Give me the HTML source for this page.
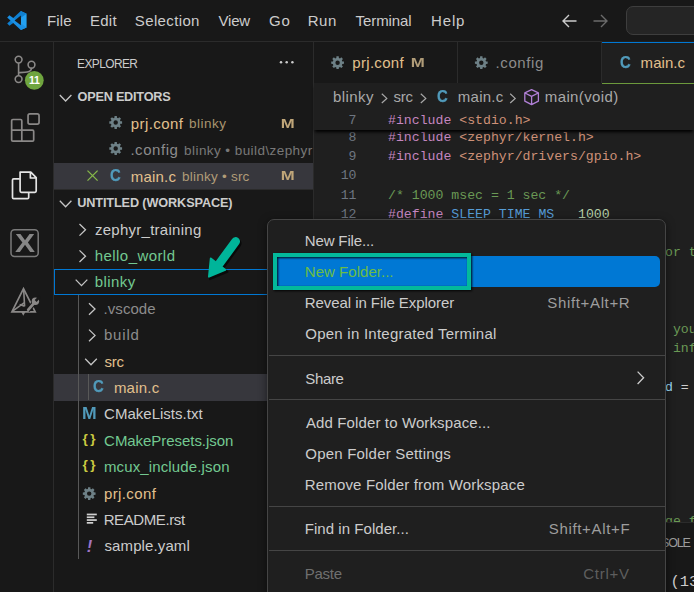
<!DOCTYPE html>
<html lang="en">
<head>
<meta charset="utf-8">
<title>main.c - Untitled (Workspace) - Visual Studio Code</title>
<style>
html,body{margin:0;padding:0;background:#181818;}
body{width:694px;height:592px;overflow:hidden;}
#app{position:relative;width:694px;height:592px;overflow:hidden;background:#181818;font-family:'Liberation Sans',sans-serif;}
.b{position:absolute;}
.t{position:absolute;white-space:pre;line-height:20px;height:20px;}
.ln{position:absolute;left:388px;height:19.2px;line-height:19.2px;white-space:pre;font-family:'Liberation Mono',monospace;font-size:13.2px;color:#cccccc;}
.no{position:absolute;left:316px;width:40.5px;text-align:right;height:19.2px;line-height:19.2px;font-family:'Liberation Mono',monospace;font-size:13.2px;color:#6e7681;}
.k{color:#c586c0}.s{color:#ce9178}.c{color:#6a9955}.m{color:#569cd6}.n{color:#b5cea8}.v{color:#9cdcfe}.f{color:#dcdcaa}.ty{color:#4ec9b0}
svg{position:absolute;overflow:visible;}
</style>
</head>
<body>
<div id="app">
<!-- title bar -->
<div class="b" style="left:0;top:0;width:694px;height:41px;background:#181818;border-bottom:1px solid #2b2b2b;"></div>
<!-- command center -->
<div class="b" style="left:626px;top:6px;width:90px;height:27px;background:#252525;border:1px solid #3e3e3e;border-radius:7px;"></div>
<!-- activity bar -->
<div class="b" style="left:0;top:42px;width:53px;height:550px;background:#181818;border-right:1px solid #2b2b2b;"></div>
<!-- sidebar -->
<div class="b" style="left:54px;top:42px;width:259px;height:550px;background:#181818;border-right:1px solid #2b2b2b;"></div>
<!-- open editors selected row -->
<div class="b" style="left:54px;top:163px;width:259px;height:26.4px;background:#37373d;"></div>
<!-- section divider -->
<div class="b" style="left:54px;top:189.4px;width:259px;height:1px;background:#2b2b2b;"></div>
<!-- tree selected row main.c -->
<div class="b" style="left:54px;top:374.2px;width:259px;height:26.4px;background:#37373d;"></div>
<!-- blinky focused outline -->
<div class="b" style="left:54px;top:269px;width:258px;height:24px;border:1px solid #0078d4;box-sizing:content-box;"></div>
<!-- indent guides -->
<div class="b" style="left:78px;top:295px;width:1px;height:264px;background:#585858;"></div>
<div class="b" style="left:88px;top:374px;width:1px;height:26.4px;background:#585858;"></div>
<!-- editor -->
<div class="b" style="left:314px;top:42px;width:380px;height:550px;background:#1f1f1f;"></div>
<!-- tab bar -->
<div class="b" style="left:314px;top:42px;width:380px;height:41px;background:#181818;border-bottom:1px solid #2b2b2b;"></div>
<div class="b" style="left:457px;top:42px;width:1px;height:41px;background:#2b2b2b;"></div>
<div class="b" style="left:601px;top:42px;width:1px;height:41px;background:#2b2b2b;"></div>
<div class="b" style="left:602px;top:41px;width:92px;height:43px;background:#1f1f1f;"></div>
<div class="b" style="left:602px;top:41.6px;width:92px;height:1.3px;background:#0078d4;"></div>
<!-- code -->
<div class="no" style="top:128.0px">8</div><div class="ln" style="top:128.0px"><span class="k">#include</span> <span class="s">&lt;zephyr/kernel.h&gt;</span></div>
<div class="no" style="top:147.2px">9</div><div class="ln" style="top:147.2px"><span class="k">#include</span> <span class="s">&lt;zephyr/drivers/gpio.h&gt;</span></div>
<div class="no" style="top:166.4px">10</div>
<div class="no" style="top:185.6px">11</div><div class="ln c" style="top:185.6px">/* 1000 msec = 1 sec */</div>
<div class="no" style="top:204.8px">12</div><div class="ln" style="top:204.8px"><span class="k">#define</span> <span class="m">SLEEP_TIME_MS</span>   <span class="n">1000</span></div>
<div class="no" style="top:224.0px">13</div>
<div class="no" style="top:243.2px">14</div><div class="ln c" style="top:243.2px">/* The devicetree node identifier for the "led0" alias. */</div>
<div class="no" style="top:262.4px">15</div><div class="ln" style="top:262.4px"><span class="k">#define</span> <span class="m">LED0_NODE</span> <span class="m">DT_ALIAS</span>(led0)</div>
<div class="no" style="top:281.6px">16</div>
<div class="no" style="top:300.8px">17</div><div class="ln c" style="top:300.8px">/*</div>
<div class="no" style="top:320.0px">18</div><div class="ln c" style="top:320.0px"> * A build error on this line means your board is unsupported.</div>
<div class="no" style="top:339.2px">19</div><div class="ln c" style="top:339.2px"> * See the sample documentation for information on how to fix this.</div>
<div class="no" style="top:358.4px">20</div><div class="ln c" style="top:358.4px"> */</div>
<div class="no" style="top:377.6px">21</div><div class="ln" style="top:377.6px"><span class="m">static</span> <span class="m">const</span> <span class="m">struct</span> <span class="ty">gpio_dt_spec</span> <span class="v">led</span> = <span class="m">GPIO_DT_SPEC_GET</span>(<span class="m">LED0_NODE</span>, gpios);</div>
<div class="no" style="top:396.8px">22</div>
<div class="no" style="top:416.0px">23</div><div class="ln" style="top:416.0px"><span class="m">int</span> <span class="f">main</span>(<span class="m">void</span>)</div>
<div class="no" style="top:435.2px">24</div><div class="ln" style="top:435.2px">{</div>
<div class="no" style="top:454.4px">25</div><div class="ln" style="top:454.4px">    <span class="m">int</span> <span class="v">ret</span>;</div>
<div class="no" style="top:473.6px">26</div>
<div class="no" style="top:492.8px">27</div><div class="ln" style="top:492.8px">    <span class="k">if</span> (!<span class="f">gpio_is_ready_dt</span>(&amp;<span class="v">led</span>)) {</div>
<div class="no" style="top:512.0px">28</div><div class="ln c" style="top:512.0px">    /* Toggle the LED line and change from on to off every second */</div>
<!-- breadcrumbs + sticky scroll cover -->
<div class="b" style="left:314px;top:83px;width:380px;height:46.6px;background:#1f1f1f;box-shadow:0 3px 3px -1px #000;"></div>
<div class="b" style="left:602px;top:82.8px;width:92px;height:1.4px;background:#6c9a3c;"></div>
<div class="no" style="top:110.7px">7</div><div class="ln" style="top:110.7px"><span class="k">#include</span> <span class="s">&lt;stdio.h&gt;</span></div>
<!-- panel -->
<div class="b" style="left:314px;top:522px;width:380px;height:70px;background:#181818;border-top:1px solid #2b2b2b;"></div>
<div class="ln" style="left:670.5px;top:572.8px;font-size:15.4px;color:#cccccc;">(13)</div>
<!-- icons -->
<svg width="694" height="592" style="left:0;top:0" viewBox="0 0 694 592">
<!-- vscode logo -->
<g>
<path d="M20.8 10.9 L26.6 13.7 L26.6 27.4 L20.8 30 Z" fill="#23a1f2"/>
<path d="M20.8 10.9 L7.2 23.4 L9.4 25.7 L26.6 13.7 Z" fill="#0f7fd0"/>
<path d="M20.8 30 L7.2 17.5 L9.4 15.2 L26.6 27.4 Z" fill="#1a8fe3"/>
<path d="M20.9 15.6 L20.9 25.3 L14.6 20.45 Z" fill="#181818"/>
</g>
<!-- title arrows -->
<path d="M576.5 21 H563 M569 15 L563 21 L569 27" fill="none" stroke="#cccccc" stroke-width="1.4"/>
<path d="M593.5 21 H607 M601 15 L607 21 L601 27" fill="none" stroke="#6b6b6b" stroke-width="1.4"/>
<!-- activity: source control -->
<g fill="none" stroke="#8a8887" stroke-width="1.6">
<circle cx="18.6" cy="59.6" r="3.4"/><circle cx="31.5" cy="64.7" r="3.4"/><circle cx="18.6" cy="79.1" r="3.4"/>
<path d="M18.6 63 V75.7 M31.5 68.1 C31.5 72.4 27 72.4 18.8 72.6"/>
</g>
<circle cx="34.3" cy="80.3" r="9.4" fill="#6fa53f"/>
<!-- activity: extensions -->
<g fill="none" stroke="#8a8887" stroke-width="1.7">
<path d="M11.65 120.7 Q11.65 119.5 12.85 119.5 H20.6 Q21.8 119.5 21.8 120.7 V130.2 H32.5 Q33.7 130.2 33.7 131.4 V139.9 Q33.7 141.1 32.5 141.1 H12.85 Q11.65 141.1 11.65 139.9 Z M11.65 130.2 H21.8 V141.1"/>
<rect x="28.05" y="113.95" width="11" height="10.2" rx="1.8"/>
</g>
<!-- activity: explorer (active) -->
<g fill="none" stroke="#e4e4e4" stroke-width="1.7" stroke-linejoin="round">
<path d="M20.1 172.1 H30.8 L36.2 177.6 V191 Q36.2 192.3 34.9 192.3 H21.4 Q20.1 192.3 20.1 191 Z M30.4 172.3 V178 H36"/>
<path d="M19.8 178.8 H13.7 Q12.5 178.8 12.5 180 V197.5 Q12.5 198.7 13.7 198.7 H27.5 Q28.7 198.7 28.7 197.5 V192.6"/>
</g>
<!-- activity: X box -->
<rect x="11" y="229.7" width="27.2" height="26.8" rx="3.5" fill="none" stroke="#7a7a7a" stroke-width="1.5"/>
<!-- activity: triangle tool -->
<g fill="none" stroke="#8a8887" stroke-width="1.7" stroke-linejoin="miter">
<path d="M23.5 288.6 L11.9 311.8 L35.2 311.8 Z"/>
<path d="M23.7 290 L24.6 306.4 M12.6 311.2 L24.3 302.6 M24.6 306.2 L19.6 304.4" stroke-width="1.6"/>
</g>
<path d="M21.2 312 L25.4 312 L23.3 315.8 Z" fill="#8a8887"/>
<path d="M27.6 310.4 L33.6 303.6" stroke="#181818" stroke-width="5" fill="none"/>
<path d="M28.2 309.8 L34 303.2" stroke="#8a8887" stroke-width="2.8" stroke-linecap="round" fill="none"/>
<circle cx="35.4" cy="301.2" r="3.7" fill="#8a8887"/>
<path d="M35.6 301 L40 296.6" stroke="#181818" stroke-width="2.6" fill="none"/>
<!-- sidebar: more -->
<g fill="#cccccc"><circle cx="281" cy="62.3" r="1.25"/><circle cx="286.7" cy="62.3" r="1.25"/><circle cx="292.4" cy="62.3" r="1.25"/></g>
<!-- chevrons -->
<path transform="translate(65.6 98)" d="M-5.8 -3 L0 3 L5.8 -3" fill="none" stroke="#c5c5c5" stroke-width="1.3"/>
<path transform="translate(65.6 203.8)" d="M-5.8 -3 L0 3 L5.8 -3" fill="none" stroke="#c5c5c5" stroke-width="1.3"/>
<path transform="translate(82.5 229.8)" d="M-3 -5.8 L3 0 L-3 5.8" fill="none" stroke="#c5c5c5" stroke-width="1.3"/>
<path transform="translate(82.5 256.2)" d="M-3 -5.8 L3 0 L-3 5.8" fill="none" stroke="#c5c5c5" stroke-width="1.3"/>
<path transform="translate(81.5 282.6)" d="M-5.8 -3 L0 3 L5.8 -3" fill="none" stroke="#c5c5c5" stroke-width="1.3"/>
<path transform="translate(92 309)" d="M-3 -5.8 L3 0 L-3 5.8" fill="none" stroke="#c5c5c5" stroke-width="1.3"/>
<path transform="translate(92 335.4)" d="M-3 -5.8 L3 0 L-3 5.8" fill="none" stroke="#c5c5c5" stroke-width="1.3"/>
<path transform="translate(91 361.8)" d="M-5.8 -3 L0 3 L5.8 -3" fill="none" stroke="#c5c5c5" stroke-width="1.3"/>
<!-- gears -->
<path transform="translate(115.7 122.5) scale(0.94)" d="M5.02 -1.37 L6.79 -1.24 L6.79 1.24 L5.02 1.37 L4.52 2.58 L5.68 3.92 L3.92 5.68 L2.58 4.52 L1.37 5.02 L1.24 6.79 L-1.24 6.79 L-1.37 5.02 L-2.58 4.52 L-3.92 5.68 L-5.68 3.92 L-4.52 2.58 L-5.02 1.37 L-6.79 1.24 L-6.79 -1.24 L-5.02 -1.37 L-4.52 -2.58 L-5.68 -3.92 L-3.92 -5.68 L-2.58 -4.52 L-1.37 -5.02 L-1.24 -6.79 L1.24 -6.79 L1.37 -5.02 L2.58 -4.52 L3.92 -5.68 L5.68 -3.92 L4.52 -2.58Z M2.35 0 A2.35 2.35 0 1 0 -2.35 0 A2.35 2.35 0 1 0 2.35 0Z" fill-rule="evenodd" fill="#6d8086"/>
<path transform="translate(115.7 148.5) scale(0.94)" d="M5.02 -1.37 L6.79 -1.24 L6.79 1.24 L5.02 1.37 L4.52 2.58 L5.68 3.92 L3.92 5.68 L2.58 4.52 L1.37 5.02 L1.24 6.79 L-1.24 6.79 L-1.37 5.02 L-2.58 4.52 L-3.92 5.68 L-5.68 3.92 L-4.52 2.58 L-5.02 1.37 L-6.79 1.24 L-6.79 -1.24 L-5.02 -1.37 L-4.52 -2.58 L-5.68 -3.92 L-3.92 -5.68 L-2.58 -4.52 L-1.37 -5.02 L-1.24 -6.79 L1.24 -6.79 L1.37 -5.02 L2.58 -4.52 L3.92 -5.68 L5.68 -3.92 L4.52 -2.58Z M2.35 0 A2.35 2.35 0 1 0 -2.35 0 A2.35 2.35 0 1 0 2.35 0Z" fill-rule="evenodd" fill="#6d8086"/>
<path transform="translate(89.2 493.6) scale(0.94)" d="M5.02 -1.37 L6.79 -1.24 L6.79 1.24 L5.02 1.37 L4.52 2.58 L5.68 3.92 L3.92 5.68 L2.58 4.52 L1.37 5.02 L1.24 6.79 L-1.24 6.79 L-1.37 5.02 L-2.58 4.52 L-3.92 5.68 L-5.68 3.92 L-4.52 2.58 L-5.02 1.37 L-6.79 1.24 L-6.79 -1.24 L-5.02 -1.37 L-4.52 -2.58 L-5.68 -3.92 L-3.92 -5.68 L-2.58 -4.52 L-1.37 -5.02 L-1.24 -6.79 L1.24 -6.79 L1.37 -5.02 L2.58 -4.52 L3.92 -5.68 L5.68 -3.92 L4.52 -2.58Z M2.35 0 A2.35 2.35 0 1 0 -2.35 0 A2.35 2.35 0 1 0 2.35 0Z" fill-rule="evenodd" fill="#6d8086"/>
<path transform="translate(337.6 62.7) scale(0.94)" d="M5.02 -1.37 L6.79 -1.24 L6.79 1.24 L5.02 1.37 L4.52 2.58 L5.68 3.92 L3.92 5.68 L2.58 4.52 L1.37 5.02 L1.24 6.79 L-1.24 6.79 L-1.37 5.02 L-2.58 4.52 L-3.92 5.68 L-5.68 3.92 L-4.52 2.58 L-5.02 1.37 L-6.79 1.24 L-6.79 -1.24 L-5.02 -1.37 L-4.52 -2.58 L-5.68 -3.92 L-3.92 -5.68 L-2.58 -4.52 L-1.37 -5.02 L-1.24 -6.79 L1.24 -6.79 L1.37 -5.02 L2.58 -4.52 L3.92 -5.68 L5.68 -3.92 L4.52 -2.58Z M2.35 0 A2.35 2.35 0 1 0 -2.35 0 A2.35 2.35 0 1 0 2.35 0Z" fill-rule="evenodd" fill="#6d8086"/>
<path transform="translate(481.3 62.7) scale(0.94)" d="M5.02 -1.37 L6.79 -1.24 L6.79 1.24 L5.02 1.37 L4.52 2.58 L5.68 3.92 L3.92 5.68 L2.58 4.52 L1.37 5.02 L1.24 6.79 L-1.24 6.79 L-1.37 5.02 L-2.58 4.52 L-3.92 5.68 L-5.68 3.92 L-4.52 2.58 L-5.02 1.37 L-6.79 1.24 L-6.79 -1.24 L-5.02 -1.37 L-4.52 -2.58 L-5.68 -3.92 L-3.92 -5.68 L-2.58 -4.52 L-1.37 -5.02 L-1.24 -6.79 L1.24 -6.79 L1.37 -5.02 L2.58 -4.52 L3.92 -5.68 L5.68 -3.92 L4.52 -2.58Z M2.35 0 A2.35 2.35 0 1 0 -2.35 0 A2.35 2.35 0 1 0 2.35 0Z" fill-rule="evenodd" fill="#6d8086"/>
<!-- close x -->
<path d="M87.5 170.6 L97.6 180.6 M97.6 170.6 L87.5 180.6" stroke="#86b84a" stroke-width="1.3" fill="none"/>
<!-- readme lines -->
<g fill="#d0d0d0"><rect x="86.8" y="513.6" width="10" height="1.7"/><rect x="86.8" y="516.4" width="7.6" height="1.7"/><rect x="86.8" y="519.2" width="10" height="1.7"/><rect x="86.8" y="522" width="6.4" height="1.7"/></g>
<!-- breadcrumb separators -->
<g fill="none" stroke="#a9a9a9" stroke-width="1.2">
<path d="M381.8 93.8 L386.8 98.4 L381.8 103"/><path d="M420.8 93.8 L425.8 98.4 L420.8 103"/><path d="M510.2 93.8 L515.2 98.4 L510.2 103"/>
</g>
<!-- breadcrumb cube -->
<g fill="none" stroke="#b180d7" stroke-width="1.3" stroke-linejoin="round">
<path d="M531.6 89.6 L538.4 92.8 V101.2 L531.6 104.6 L524.8 101.2 V92.8 Z M525 93 L531.6 96.4 L538.2 93 M531.6 96.4 V104.4"/>
</g>
<!-- submenu arrow drawn in overlay -->
</svg>
<!-- letter icons -->
<span class="t" style="left:26.3px;top:70.3px;width:16px;text-align:center;font-size:10.5px;font-weight:bold;color:#fff;letter-spacing:-0.3px;">11</span>
<span class="t" style="left:13.6px;top:231.2px;width:22px;text-align:center;font-size:25px;line-height:24px;height:24px;font-weight:bold;color:#868686;transform:scaleX(1.2);">X</span>
<span class="t" style="left:110.0px;top:165.5px;font-size:16px;font-weight:bold;color:#519aba;-webkit-text-stroke:0.25px #519aba;transform:scaleX(0.93);transform-origin:0 50%;">C</span>
<span class="t" style="left:92.5px;top:376.5px;font-size:16px;font-weight:bold;color:#519aba;-webkit-text-stroke:0.25px #519aba;transform:scaleX(0.93);transform-origin:0 50%;">C</span>
<span class="t" style="left:619.6px;top:52.9px;font-size:16px;font-weight:bold;color:#519aba;-webkit-text-stroke:0.25px #519aba;transform:scaleX(0.93);transform-origin:0 50%;">C</span>
<span class="t" style="left:437.0px;top:86.6px;font-size:16px;font-weight:bold;color:#519aba;-webkit-text-stroke:0.25px #519aba;transform:scaleX(0.93);transform-origin:0 50%;">C</span>
<span class="t" style="left:81.7px;top:403.6px;font-size:16px;font-weight:bold;color:#519aba;transform:scaleX(1.1);transform-origin:0 50%;">M</span>
<span class="t" style="left:82.4px;top:428.6px;font-size:13.6px;font-weight:bold;color:#cbcb41;letter-spacing:2.6px;">{}</span>
<span class="t" style="left:82.4px;top:455px;font-size:13.6px;font-weight:bold;color:#cbcb41;letter-spacing:2.6px;">{}</span>
<span class="t" style="left:86.8px;top:535.6px;font-size:16.5px;font-weight:bold;font-style:italic;color:#a074c4;">!</span>
<span class="t" style="left:47.1px;top:10.5px;font-size:15px;color:#cccccc;letter-spacing:0.08px;">File</span>
<span class="t" style="left:89.9px;top:10.5px;font-size:15px;color:#cccccc;letter-spacing:0.30px;">Edit</span>
<span class="t" style="left:134.8px;top:10.5px;font-size:15px;color:#cccccc;letter-spacing:0.37px;">Selection</span>
<span class="t" style="left:218.4px;top:10.5px;font-size:15px;color:#cccccc;letter-spacing:-0.16px;">View</span>
<span class="t" style="left:269.0px;top:10.5px;font-size:15px;color:#cccccc;letter-spacing:0.87px;">Go</span>
<span class="t" style="left:307.8px;top:10.5px;font-size:15px;color:#cccccc;letter-spacing:0.49px;">Run</span>
<span class="t" style="left:355.5px;top:10.5px;font-size:15px;color:#cccccc;letter-spacing:-0.07px;">Terminal</span>
<span class="t" style="left:431.1px;top:10.5px;font-size:15px;color:#cccccc;letter-spacing:0.84px;">Help</span>
<span class="t" style="left:77.0px;top:53.7px;font-size:11.9px;color:#cccccc;letter-spacing:-0.55px;">EXPLORER</span>
<span class="t" style="left:77.5px;top:86.9px;font-size:12.7px;color:#cccccc;letter-spacing:-0.22px;font-weight:bold">OPEN EDITORS</span>
<span class="t" style="left:130.8px;top:113.9px;font-size:15px;color:#e2c08d;letter-spacing:0.42px;">prj.conf</span>
<span class="t" style="left:189.1px;top:114.4px;font-size:13.5px;color:#a8946f;letter-spacing:0.48px;">blinky</span>
<span class="t" style="left:280.7px;top:113.5px;font-size:13px;color:#c0a679;letter-spacing:0.00px;font-weight:bold;transform:scaleX(1.287);transform-origin:0.87px 50%">M</span>
<span class="t" style="left:130.4px;top:140.3px;font-size:15px;color:#8c8c8c;letter-spacing:0.56px;">.config</span>
<span class="t" style="left:184.1px;top:140.8px;font-size:13.5px;color:#787878;letter-spacing:0.43px;">blinky • build\zephyr</span>
<span class="t" style="left:130.8px;top:166.7px;font-size:15px;color:#e2c08d;letter-spacing:0.18px;">main.c</span>
<span class="t" style="left:182.1px;top:167.2px;font-size:13.5px;color:#b09c78;letter-spacing:0.23px;">blinky • src</span>
<span class="t" style="left:280.7px;top:166.3px;font-size:13px;color:#c0a679;letter-spacing:0.00px;font-weight:bold;transform:scaleX(1.287);transform-origin:0.87px 50%">M</span>
<span class="t" style="left:77.2px;top:192.9px;font-size:12.7px;color:#cccccc;letter-spacing:-0.12px;font-weight:bold">UNTITLED (WORKSPACE)</span>
<span class="t" style="left:94.9px;top:219.5px;font-size:15px;color:#cccccc;letter-spacing:0.27px;">zephyr_training</span>
<span class="t" style="left:94.8px;top:245.9px;font-size:15px;color:#73c991;letter-spacing:0.43px;">hello_world</span>
<span class="t" style="left:94.8px;top:272.3px;font-size:15px;color:#73c991;letter-spacing:0.43px;">blinky</span>
<span class="t" style="left:103.5px;top:298.7px;font-size:15px;color:#8c8c8c;letter-spacing:0.07px;">.vscode</span>
<span class="t" style="left:103.9px;top:325.1px;font-size:15px;color:#8c8c8c;letter-spacing:0.84px;">build</span>
<span class="t" style="left:104.5px;top:351.5px;font-size:15px;color:#e2c08d;letter-spacing:-0.29px;">src</span>
<span class="t" style="left:113.9px;top:377.9px;font-size:15px;color:#e2c08d;letter-spacing:0.22px;">main.c</span>
<span class="t" style="left:104.1px;top:404.3px;font-size:15px;color:#cccccc;letter-spacing:0.01px;">CMakeLists.txt</span>
<span class="t" style="left:104.1px;top:430.7px;font-size:15px;color:#73c991;letter-spacing:-0.05px;">CMakePresets.json</span>
<span class="t" style="left:103.9px;top:457.1px;font-size:15px;color:#73c991;letter-spacing:0.14px;">mcux_include.json</span>
<span class="t" style="left:103.9px;top:483.5px;font-size:15px;color:#e2c08d;letter-spacing:0.41px;">prj.conf</span>
<span class="t" style="left:103.7px;top:509.9px;font-size:15px;color:#cccccc;letter-spacing:-0.40px;">README.rst</span>
<span class="t" style="left:104.5px;top:536.3px;font-size:15px;color:#cccccc;letter-spacing:0.11px;">sample.yaml</span>
<span class="t" style="left:352.3px;top:53.2px;font-size:15px;color:#e2c08d;letter-spacing:0.31px;">prj.conf</span>
<span class="t" style="left:410.5px;top:53.4px;font-size:13px;color:#b09c78;letter-spacing:0.00px;font-weight:bold;transform:scaleX(1.298);transform-origin:0.87px 50%">M</span>
<span class="t" style="left:495.6px;top:53.2px;font-size:15px;color:#8c8c8c;letter-spacing:0.59px;">.config</span>
<span class="t" style="left:640.6px;top:53.3px;font-size:15px;color:#e2c08d;letter-spacing:0.06px;">main.c</span>
<span class="t" style="left:333.0px;top:87.2px;font-size:15px;color:#a9a9a9;letter-spacing:0.41px;">blinky</span>
<span class="t" style="left:393.6px;top:87.2px;font-size:15px;color:#a9a9a9;letter-spacing:-0.24px;">src</span>
<span class="t" style="left:457.8px;top:87.2px;font-size:15px;color:#a9a9a9;letter-spacing:0.26px;">main.c</span>
<span class="t" style="left:544.8px;top:87.2px;font-size:15px;color:#a9a9a9;letter-spacing:0.38px;">main(void)</span>
<span class="t" style="left:661.1px;top:532.7px;font-size:12.5px;color:#9d9d9d;letter-spacing:-1.20px;">SOLE</span><!-- context menu -->
<div class="b" style="left:267px;top:218.9px;width:396.9px;height:400px;background:#1f1f1f;border:1px solid #454545;border-radius:7px;box-shadow:0 2px 8px rgba(0,0,0,.5);"></div>
<div class="b" style="left:273px;top:256.2px;width:387px;height:30.4px;background:#0078d4;border-radius:5px;"></div>
<div class="b" style="left:268.5px;top:355.3px;width:397px;height:1px;background:#454545;"></div>
<div class="b" style="left:268.5px;top:399.3px;width:397px;height:1px;background:#454545;"></div>
<div class="b" style="left:268.5px;top:506.3px;width:397px;height:1px;background:#454545;"></div>
<div class="b" style="left:268.5px;top:550.3px;width:397px;height:1px;background:#454545;"></div>
<svg width="694" height="592" style="left:0;top:0" viewBox="0 0 694 592">
<path d="M637.6 371.6 L643.6 377.8 L637.6 384" fill="none" stroke="#cccccc" stroke-width="1.3"/>
</svg>
<span class="t" style="left:304.8px;top:230.5px;font-size:15px;color:#cccccc;letter-spacing:-0.15px;">New File...</span>
<span class="t" style="left:304.8px;top:261.7px;font-size:15px;color:#6cbd45;letter-spacing:0.03px;">New Folder...</span>
<span class="t" style="left:304.8px;top:292.9px;font-size:15px;color:#cccccc;letter-spacing:-0.07px;">Reveal in File Explorer</span>
<span class="t" style="left:305.3px;top:324.1px;font-size:15px;color:#cccccc;letter-spacing:0.24px;">Open in Integrated Terminal</span>
<span class="t" style="left:305.3px;top:368.7px;font-size:15px;color:#cccccc;letter-spacing:-0.34px;">Share</span>
<span class="t" style="left:306.0px;top:412.7px;font-size:15px;color:#cccccc;letter-spacing:0.12px;">Add Folder to Workspace...</span>
<span class="t" style="left:305.3px;top:443.9px;font-size:15px;color:#cccccc;letter-spacing:0.20px;">Open Folder Settings</span>
<span class="t" style="left:304.8px;top:475.1px;font-size:15px;color:#cccccc;letter-spacing:0.16px;">Remove Folder from Workspace</span>
<span class="t" style="left:304.8px;top:519.3px;font-size:15px;color:#cccccc;letter-spacing:0.04px;">Find in Folder...</span>
<span class="t" style="left:304.8px;top:563.5px;font-size:15px;color:#6f6f6f;letter-spacing:-0.29px;">Paste</span>
<span class="t" style="left:547.3px;top:292.9px;font-size:15px;color:#9d9d9d;letter-spacing:0.65px;">Shift+Alt+R</span>
<span class="t" style="left:548.8px;top:519.3px;font-size:15px;color:#9d9d9d;letter-spacing:0.66px;">Shift+Alt+F</span>
<span class="t" style="left:583.2px;top:563.5px;font-size:15px;color:#5e5e5e;letter-spacing:0.75px;">Ctrl+V</span>
<!-- teal highlight -->
<div class="b" style="left:272.9px;top:253.1px;width:198.1px;height:36.8px;box-sizing:border-box;border:4.2px solid #03b99b;filter:drop-shadow(1.1px 1.7px 1.1px rgba(0,0,0,.9));"></div>
<svg width="694" height="592" style="left:0;top:0" viewBox="0 0 694 592">
<g transform="translate(1.6,1.8)" opacity=".6">
<path d="M235.6 241.5 L219.5 263.5" stroke="#000" stroke-width="8.8" stroke-linecap="round" fill="none"/>
<path d="M210.4 257.9 L225.9 270 L208.4 277.4 Z" fill="#000" stroke="#000" stroke-width="2" stroke-linejoin="round"/>
</g>
<path d="M235.6 241.5 L219.5 263.5" stroke="#00b59a" stroke-width="8.8" stroke-linecap="round" fill="none"/>
<path d="M210.8 258.6 L225.2 269.8 L209 276.6 Z" fill="#00b59a" stroke="#00b59a" stroke-width="2" stroke-linejoin="round"/>
</svg>

</div>
</body>
</html>
